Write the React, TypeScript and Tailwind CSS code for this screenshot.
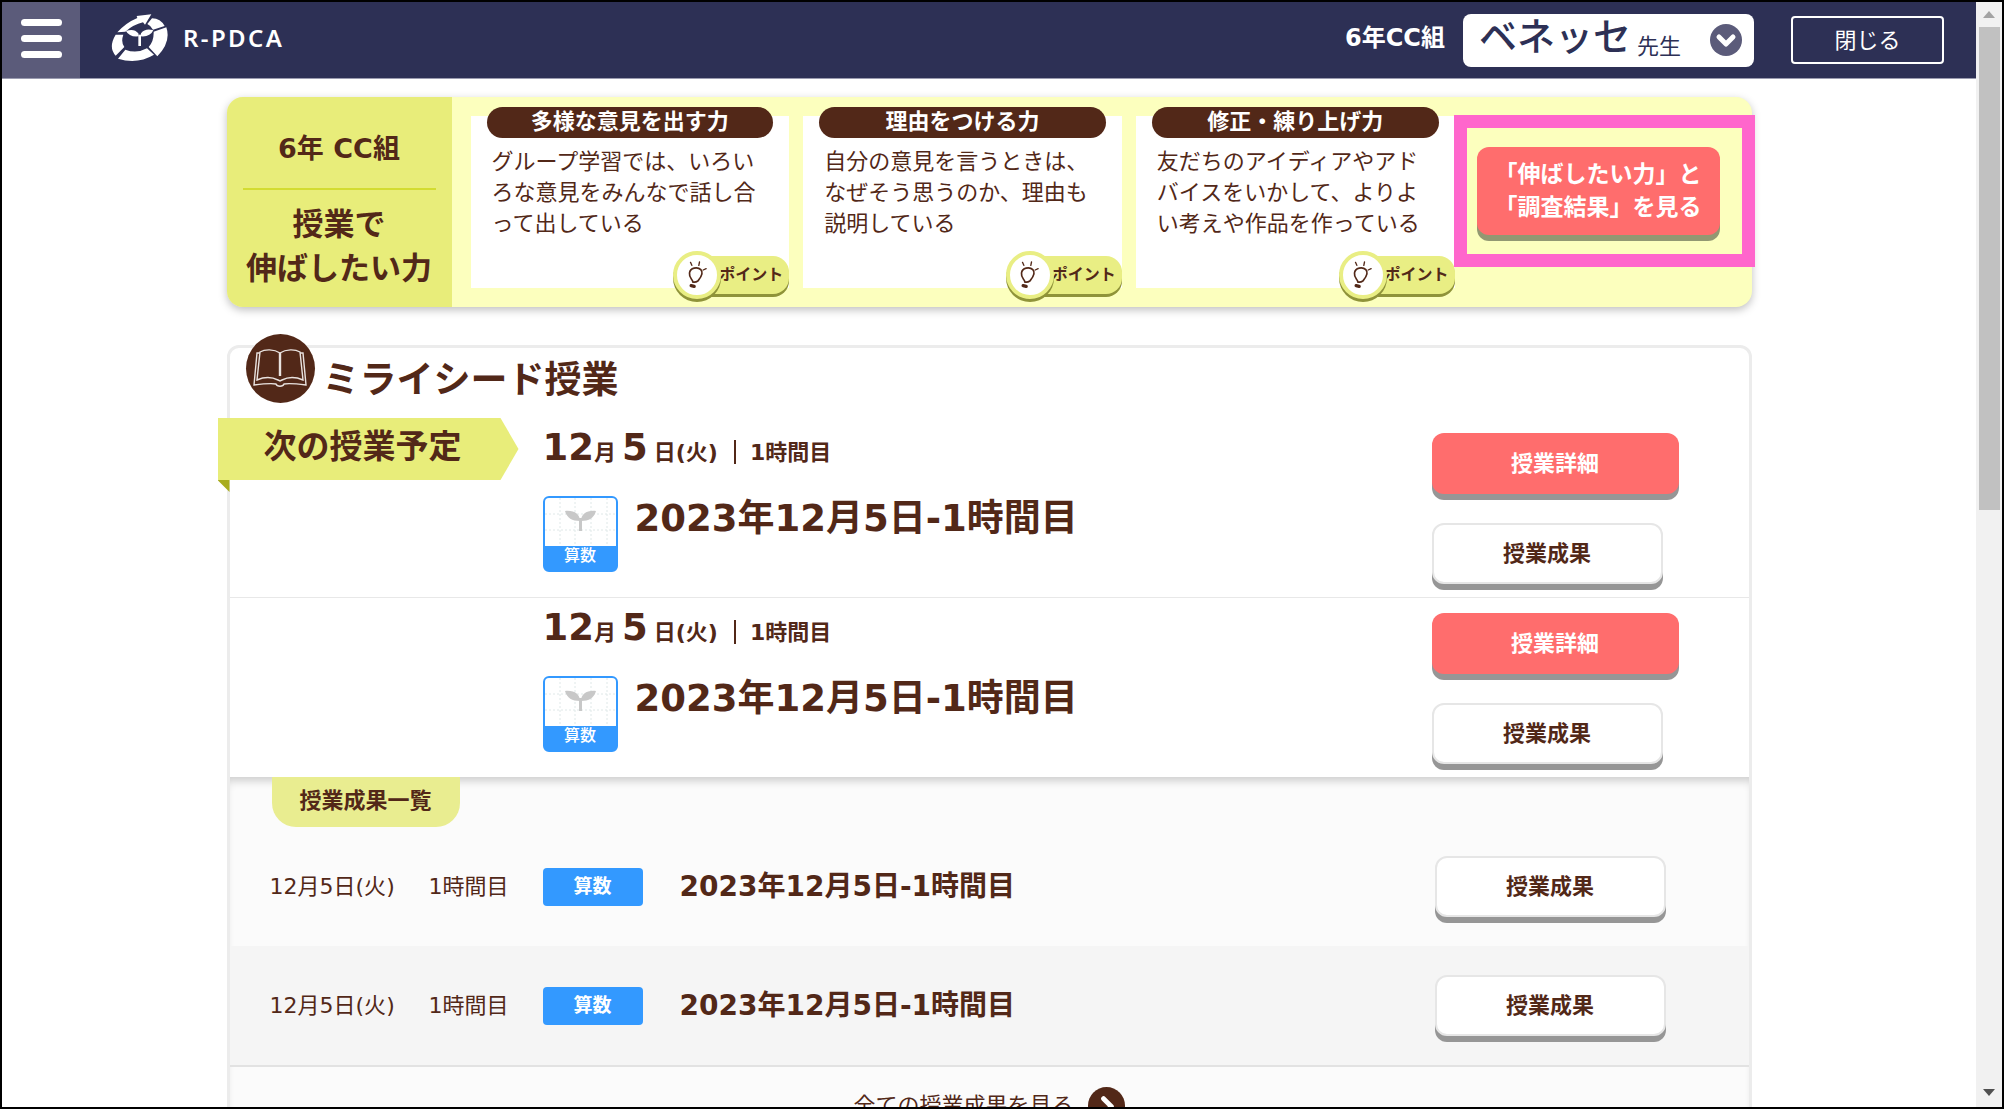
import type { ReactNode } from "react";

const points = [
  {
    title: "多様な意見を出す力",
    text: "グループ学習では、いろいろな意見をみんなで話し合って出している",
  },
  {
    title: "理由をつける力",
    text: "自分の意見を言うときは、なぜそう思うのか、理由も説明している",
  },
  {
    title: "修正・練り上げ力",
    text: "友だちのアイディアやアドバイスをいかして、よりよい考えや作品を作っている",
  },
];

const lessons = [
  { id: 1, month: 12, day: 5, weekday: "火", period: "1時間目", subject: "算数", title: "2023年12月5日-1時間目" },
  { id: 2, month: 12, day: 5, weekday: "火", period: "1時間目", subject: "算数", title: "2023年12月5日-1時間目" },
];

function Logo() {
  return (
    <svg viewBox="0 0 172 144" className="h-12 w-[58px]" fill="#fff" aria-hidden="true">
      <path d="M108 30L122 13Q148 14 160 36L125 47Q120 36 108 30Z" />
      <path d="M127 53L165 40Q180 84 138 127L112 99Q128 82 127 53Z" />
      <path d="M107 103L128 122Q78 152 20 134L42 107Q76 120 107 103Z" />
      <path d="M36 62Q28 84 39 99L13 125Q-10 100 13 62Z" />
      <path d="M18 55Q44 26 78 12L76 6L120 1L101 32L95 25Q66 32 42 53Z" />
      <path d="M44 51Q68 42 81 58L82 67Q54 70 44 51ZM126 49Q102 42 89 58L88 67Q116 70 126 49Z" />
      <path d="M81 62H89V96H81Z" />
    </svg>
  );
}

function BookIcon() {
  return (
    <span className="flex size-[69px] shrink-0 items-center justify-center rounded-full bg-[#522818]">
      <svg viewBox="0 0 54 40" className="h-10 w-[54px]" fill="none" stroke="#e9e2df" strokeWidth="1.4" aria-hidden="true">
        <path d="M27 4C21 0 12 0 7 3L4 31C11 28 19 28 25 31L27 32L29 31C35 28 43 28 50 31L47 3C42 0 33 0 27 4Z" />
        <path d="M7 4H4L1 36C9 35 17 34 23 35C24 38 30 38 31 35C37 34 45 35 53 36L50 4H47" />
        <path d="M27 4V27" strokeWidth="2.4" />
      </svg>
    </span>
  );
}

function BulbIcon() {
  return (
    <svg viewBox="0 0 56 84" className="h-7 w-[19px]" fill="none" stroke="#522818" strokeWidth="5" strokeLinecap="round" aria-hidden="true">
      <path d="M14 63C14 55 2 52 4 36C6 20 28 16 38 26C49 38 34 54 29 60Q22 65 14 63Z" />
      <path d="M7 4L11 13M34 3L32 13M54 23L45 27" strokeWidth="4" />
      <path d="M9 74L18 76" strokeWidth="10" />
    </svg>
  );
}

function PointButton() {
  return (
    <button type="button" className="absolute right-0 -bottom-[11px] flex items-center">
      <span className="z-10 -mr-6 flex size-12 items-center justify-center rounded-full border-4 border-[#e9ee84] bg-white shadow-[0_3px_0_#8f9339]">
        <BulbIcon />
      </span>
      <span className="h-[38px] rounded-r-2xl bg-[#e9ee84] pr-1.5 pl-[22px] text-base leading-[38px] font-bold shadow-[0_3px_0_#8f9339]">
        ポイント
      </span>
    </button>
  );
}

function SubjectTile({ name }: { name: string }) {
  return (
    <div className="flex h-[76px] w-[75px] shrink-0 flex-col overflow-hidden rounded-md border-2 border-[#3399ff] bg-[#3399ff]">
      <svg viewBox="0 0 71 48" className="h-12 w-full bg-white" aria-hidden="true">
        <path d="M15 0V48M30 0V48M46 0V48M62 0V48M0 16H71M0 32H71" stroke="#dfe8e8" strokeDasharray="2 2" />
        <path d="M20 13C29 12 35 16 35 23C27 23 22 20 20 13zM51 13C42 12 36 16 36 23C44 23 49 20 51 13z" fill="#c8c8c8" />
        <path d="M35.500 20V33" stroke="#c8c8c8" strokeWidth="3" />
      </svg>
      <span className="text-center text-base leading-5 font-medium text-white">{name}</span>
    </div>
  );
}

function ResultButton() {
  return (
    <button
      type="button"
      className="h-[61px] w-[231px] rounded-xl border-2 border-[#e6e6e6] bg-white text-[22px] font-bold shadow-[0_6px_0_#969696]"
    >
      授業成果
    </button>
  );
}

function Header() {
  return (
    <header className="flex h-[77px] items-center border-b border-[#9a9bb0] bg-[#2d3055] text-white">
      <button type="button" aria-label="メニュー" className="flex h-full w-[78px] flex-col items-center justify-center gap-[9px] bg-[#5b5b7a] pb-1">
        <span className="h-[7px] w-[41px] rounded-full bg-white" />
        <span className="h-[7px] w-[41px] rounded-full bg-white" />
        <span className="h-[7px] w-[41px] rounded-full bg-white" />
      </button>
      <a href="#" className="ml-[31px] flex items-center gap-3.5 pb-1">
        <Logo />
        <span className="font-['Noto_Sans','Noto_Sans_CJK_JP',sans-serif] text-2xl font-semibold tracking-widest">R-PDCA</span>
      </a>
      <p className="ml-auto pb-1 text-2xl font-bold">6年CC組</p>
      <button
        type="button"
        aria-haspopup="menu"
        className="ml-[18px] flex h-[53px] w-[291px] items-center rounded-lg bg-white pr-3 pl-4 text-[#2d3055]"
      >
        <span className="pb-1.5 text-[38px] leading-[48px] font-medium">ベネッセ</span>
        <span className="ml-1.5 pt-3 text-[22px]">先生</span>
        <span className="ml-auto flex size-8 items-center justify-center rounded-full bg-[#5b5b7a]">
          <svg viewBox="0 0 32 32" className="size-8" fill="none" stroke="#fff" strokeWidth="5" strokeLinecap="round" strokeLinejoin="round" aria-hidden="true">
            <path d="M9 13L16 20L23 13" />
          </svg>
        </span>
      </button>
      <button type="button" className="mr-8 ml-[37px] h-12 w-[153px] rounded-sm border-2 border-white text-[22px]">
        閉じる
      </button>
    </header>
  );
}

function Goals() {
  return (
    <section className="flex rounded-2xl bg-[#fcffbe] shadow-[0_3px_8px_rgba(0,0,0,0.25)]">
      <div className="w-[225px] shrink-0 rounded-l-2xl bg-[#e8ed7a] px-4 pt-[31px] text-center font-bold">
        <p className="pb-[18px] text-[27px] leading-[42px]">6年 CC組</p>
        <h2 className="border-t-2 border-[#d3dc31] pt-3 text-[31px] leading-[44px]">
          授業で
          <br />
          伸ばしたい力
        </h2>
      </div>
      <div className="flex flex-1 gap-3.5 py-[19px] pl-[19px]">
        {points.map((point) => (
          <article key={point.title} className="relative min-h-[172px] flex-1 bg-white px-4">
            <h3 className="-mt-[9px] h-[31px] rounded-full bg-[#522818] text-center text-[22px] leading-[30px] font-bold text-white">
              {point.title}
            </h3>
            <p className="pt-2 pr-0.5 pl-[5px] text-[22px] leading-[31px]">{point.text}</p>
            <PointButton />
          </article>
        ))}
      </div>
      <div className="w-[297px] shrink-0 pt-[50px] pl-[22px]">
        <div className="relative w-[243px]">
          <button
            type="button"
            className="h-[88px] w-full rounded-xl bg-[#ff6d6d] text-[23px] leading-[33px] font-bold text-white shadow-[0_6px_0_#929872]"
          >
            「伸ばしたい力」と
            <br />
            「調査結果」を見る
          </button>
          <div className="pointer-events-none absolute -inset-y-8 -right-[35px] -left-[23px] border-[13px] border-[#ff66cc]" />
        </div>
      </div>
    </section>
  );
}

function LessonRow({ lesson, label }: { lesson: (typeof lessons)[number]; label?: ReactNode }) {
  return (
    <li className="flex border-b border-[#e8e8e8] pb-[13px] last:border-b-0">
      <div className="w-[313px] shrink-0">{label}</div>
      <div className="flex-1 pt-2">
        <p className="flex h-11 items-baseline text-[22px] leading-[44px] font-bold">
          <span className="text-[37px] leading-[44px]">{lesson.month}</span>月
          <span className="mx-1.5 text-[37px] leading-[44px]">{lesson.day}</span>日({lesson.weekday})
          <span className="mr-3.5 ml-4 h-6 w-0.5 translate-y-1 self-center bg-[#522818]" />
          {lesson.period}
        </p>
        <div className="flex gap-[17px] pt-[26px]">
          <SubjectTile name={lesson.subject} />
          <h3 className="pt-0.5 text-[37px] leading-[42px] font-bold">{lesson.title}</h3>
        </div>
      </div>
      <div className="flex w-[317px] shrink-0 flex-col items-start gap-[29px] pt-[15px]">
        <button
          type="button"
          className="h-[61px] w-[247px] rounded-xl bg-[#ff6d6d] text-[22px] font-bold text-white shadow-[0_6px_0_#969696]"
        >
          授業詳細
        </button>
        <ResultButton />
      </div>
    </li>
  );
}

function NextLabel() {
  return (
    <div className="-ml-3 w-[301px]">
      <p className="h-[62px] bg-[#e8ed7a] pl-[46px] text-[33px] leading-[58px] font-bold [clip-path:polygon(0_0,283px_0,100%_50%,283px_100%,0_100%)]">
        次の授業予定
      </p>
      <div className="size-3 bg-[#a8ac1e] [clip-path:polygon(0_0,100%_0,100%_100%)]" />
    </div>
  );
}

function Lessons() {
  return (
    <section className="mt-[38px] rounded-xl border-[3px] border-[#ececec] bg-white">
      <div className="flex h-[70px] gap-2 pl-4">
        <div className="-mt-3.5">
          <BookIcon />
        </div>
        <h2 className="pt-1.5 text-[37px] leading-[54px] font-bold">ミライシード授業</h2>
      </div>
      <ul>
        {lessons.map((lesson, i) => (
          <LessonRow key={lesson.id} lesson={lesson} label={i === 0 && <NextLabel />} />
        ))}
      </ul>
      <div className="bg-[#fbfbfb] shadow-[inset_0_8px_8px_-4px_rgba(0,0,0,0.18)]">
        <h3 className="ml-[42px] h-[50px] w-[188px] rounded-b-3xl bg-[#e9ed90] text-center text-[22px] leading-[48px] font-bold">
          授業成果一覧
        </h3>
        <ul>
          {lessons.map((lesson) => (
            <li key={lesson.id} className="flex h-[119px] items-center pr-[83px] pl-10 even:bg-[#f5f5f5]">
              <span className="w-[159px] text-[22px]">
                {lesson.month}月{lesson.day}日({lesson.weekday})
              </span>
              <span className="w-[114px] text-[22px]">{lesson.period}</span>
              <span className="h-[38px] w-[100px] rounded-sm bg-[#3399ff] text-center text-[19px] leading-9 font-bold text-white">
                {lesson.subject}
              </span>
              <h4 className="ml-[37px] flex-1 text-[28px] font-bold">{lesson.title}</h4>
              <ResultButton />
            </li>
          ))}
        </ul>
        <div className="flex justify-center border-t-2 border-[#e2e2e2] pt-5 pb-8">
          <a href="#" className="flex items-center gap-3.5 text-[22px]">
            全ての授業成果を見る
            <span className="flex size-[37px] items-center justify-center rounded-full bg-[#522818]">
              <svg viewBox="0 0 37 37" className="size-9" fill="none" stroke="#fff" strokeWidth="5" strokeLinecap="round" strokeLinejoin="round" aria-hidden="true">
                <path d="M16 11L24 19L16 27" />
              </svg>
            </span>
          </a>
        </div>
      </div>
    </section>
  );
}

function Scrollbar() {
  return (
    <div className="flex w-[26px] shrink-0 flex-col items-center bg-[#f1f1f1]" aria-hidden="true">
      <div className="flex h-[25px] items-center">
        <svg viewBox="0 0 12 7" className="h-[7px] w-3">
          <path d="M0 7L6 0L12 7Z" fill="#a3a3a3" />
        </svg>
      </div>
      <div className="w-[21px] flex-1">
        <div className="h-[46%] bg-[#c1c1c1]" />
      </div>
      <div className="flex h-[30px] items-center">
        <svg viewBox="0 0 12 7" className="h-[7px] w-3">
          <path d="M0 0H12L6 7Z" fill="#505050" />
        </svg>
      </div>
    </div>
  );
}

export default function App() {
  return (
    <div className="flex h-screen overflow-hidden border-2 border-black bg-white font-['DejaVu_Sans','Noto_Sans_CJK_JP',sans-serif] text-[#522818]">
      <div className="min-w-0 flex-1">
        <Header />
        <main className="mx-auto max-w-[1525px] pt-[18px]">
          <Goals />
          <Lessons />
        </main>
      </div>
      <Scrollbar />
    </div>
  );
}
